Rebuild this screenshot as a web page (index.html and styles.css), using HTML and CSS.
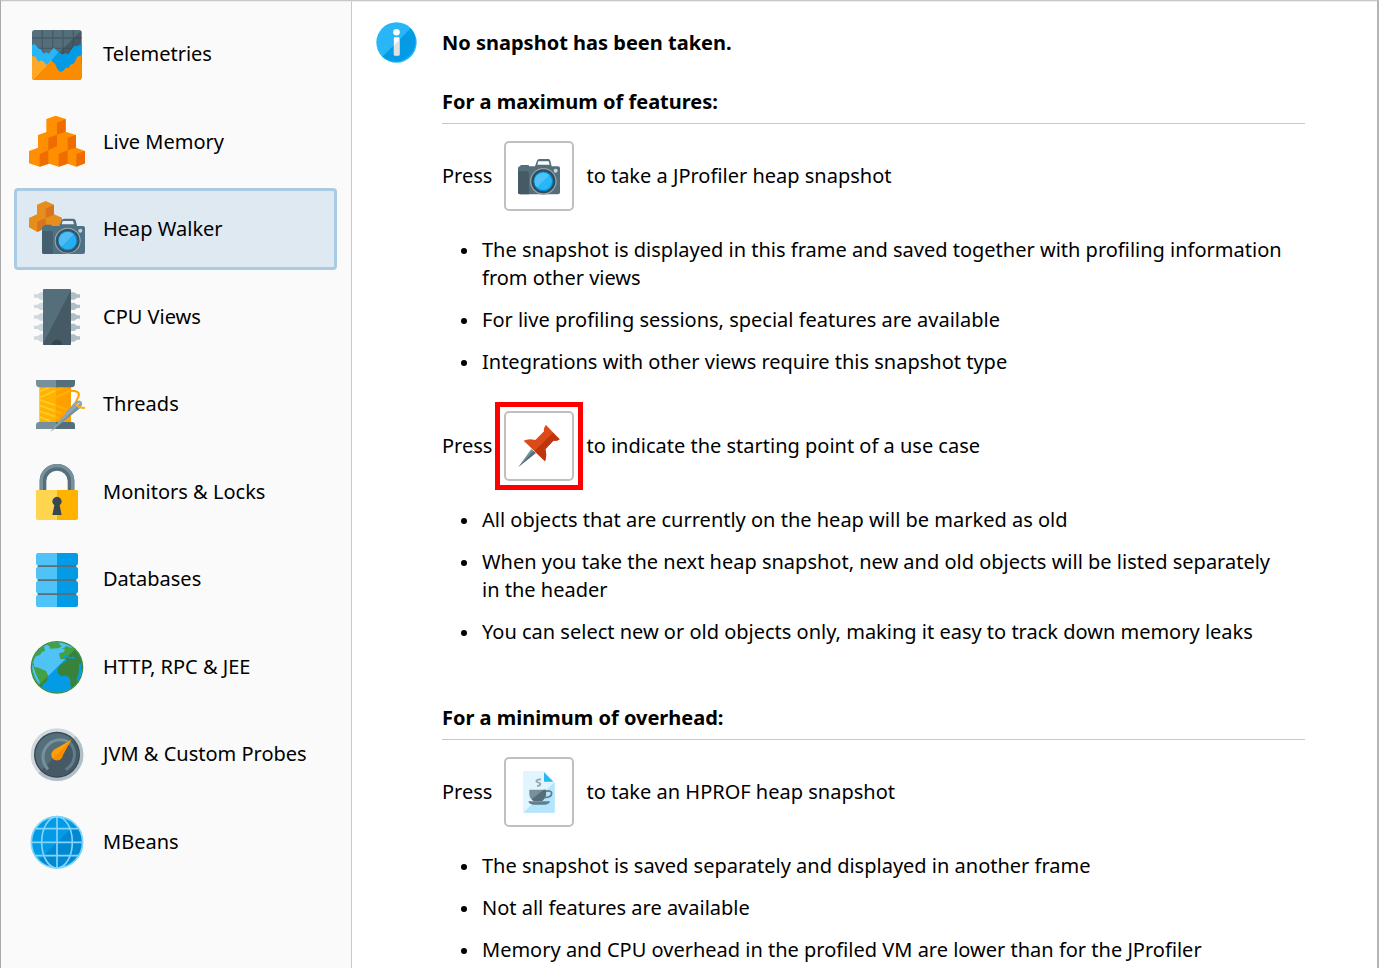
FILE: index.html
```html
<!DOCTYPE html>
<html lang="en">

<head>
    <meta charset="utf-8">
    <title>Heap Walker</title>
    <link rel="stylesheet" href="styles.css">
</head>

<body>

    <div class="frame">
        <nav class="sidebar">
            <ul class="view-list">
                <li>
                    <button type="button" class="view">
                        <svg class="view-icon" viewBox="87 78 168 168">
                            <clipPath id="chart"><rect x="96" y="90" width="149" height="150" rx="8" /></clipPath>
                            <g clip-path="url(#chart)">
                                <path fill="#546e7a" d="M96 90h149v150H96z" />
                                <path fill="#455a64" d="M245 90v100h-100z" />
                                <path stroke="#37474f" stroke-opacity=".5" stroke-width="4" fill="none" d="M127 90v80M158 90v80M189 90v80M220 90v80M96 114h149M96 145h149" />
                                <path fill="#29b6f6" d="M96 134l9-1 9 11 10 5 7 12 8-4 7 4 9-11 7-7 12 13 10 7v60H96z" />
                                <path fill="#039be5" d="M175 157l9 7 12-4 10 2 8-13 9-12 9 2 6-5h7v100H110z" />
                                <path fill="#ffa726" d="M96 168l10 2 9 15 8-4 8 4 9 10 9-9 5-6v60H96z" />
                                <path fill="#fb8c00" d="M103 236l51-54 11 9 7 16 9 9 9-4 7-8 10-1 4-9 10-3 6-10 4-10 14-6v75H100z" />
                            </g>
                        </svg>
                        <span>Telemetries</span>
                    </button>
                </li>
                <li>
                    <button type="button" class="view">
                        <svg class="view-icon" viewBox="87 342 168 168">
                            <path fill="#ff8f00" d="M139 357l28-10 30 10v38l31 10v38l27 10v37l-26 10-26-9-27 9-28-9-29 9-32-10v-37l27-10v-38l25-9z" />
                            <path fill="#ef6c00" d="M171 368l26-11v38l-26 9zM145 413l26-9v35l-26 12zM203 413l25-8v38l-25 8zM119 462l26-11v40l-26 9zM176 461l27-10v40l-27 9zM229 462l26-9v37l-26 10z" />
                        </svg>
                        <span>Live Memory</span>
                    </button>
                </li>
                <li>
                    <button type="button" class="view selected">
                        <svg class="view-icon" viewBox="87 63 168 168">
                            <path fill="#e58e1e" d="M111 74l26-11 25 11v29l24 10v28l-24 10-24-9-26 14-25-14v-28l24-11z" />
                            <path fill="#d9731c" d="M137 86l25-12v30l-25 10zM112 125l25-11v31l-25 11z" />
                            <path fill="#4f7184" d="M132 138q1-4 5-4h14q4 0 5 4h22l7-17q2-5 7-5h28q5 0 7 5l4 17h18q6 0 6 6v72q0 6-6 6H132q-6 0-6-6v-72q0-6 6-6z" />
                            <path fill="#435f70" d="M126 153h26q7 0 7 7v62h-27q-6 0-6-6z" />
                            <path fill="#e4ecf2" d="M188 123h31l3 10h-37z" />
                            <circle cx="241" cy="152" r="6" fill="#bfced8" />
                            <circle cx="203" cy="182" r="39" fill="#9aaebb" />
                            <circle cx="203" cy="182" r="36" fill="#3b525f" />
                            <circle cx="203" cy="182" r="29" fill="#098bd5" />
                            <circle cx="203" cy="182" r="26" fill="#29aef2" />
                            <path fill="#4fbdf3" d="M184 200a26 26 0 0 1 37-37z" />
                        </svg>
                        <span>Heap Walker</span>
                    </button>
                </li>
                <li>
                    <button type="button" class="view">
                        <svg class="view-icon" viewBox="87 327 168 168">
                            <path fill="#cfd8dc" d="M102 343h11l8-6h9v22h-9l-8-6h-11zM102 374h11l8-6h9v22h-9l-8-6h-11zM102 406h11l8-6h9v22h-9l-8-6h-11zM102 437h11l8-6h9v22h-9l-8-6h-11zM102 469h11l8-6h9v22h-9l-8-6h-11z" />
                            <path fill="#b0bec5" d="M240 343h-9l-8-6h-11v22h11l8-6h9zM240 374h-9l-8-6h-11v22h11l8-6h9zM240 406h-9l-8-6h-11v22h11l8-6h9zM240 437h-9l-8-6h-11v22h11l8-6h9zM240 469h-9l-8-6h-11v22h11l8-6h9z" />
                            <rect x="129" y="327" width="84" height="168" rx="4" fill="#546e7a" />
                            <path fill="#455a64" d="M213 330v161q0 4-4 4h-76q-3 0-4-3z" />
                            <path fill="#37474f" d="M155 495a16 16 0 0 1 32 0z" />
                        </svg>
                        <span>CPU Views</span>
                    </button>
                </li>
                <li>
                    <button type="button" class="view">
                        <svg class="view-icon" viewBox="45 48 168 168">
                            <path fill="#ffb300" d="M76 80h49v107H76z" />
                            <path fill="#ffa000" d="M124 80h47v107h-47z" />
                            <path stroke="#ffca28" stroke-width="6" fill="none" d="M78 94l28-12M78 112l46-20M78 120l46 16M78 137l46 16M78 154l46 16M78 171l30 12" />
                            <path stroke="#ffb300" stroke-width="6" fill="none" d="M124 92l24-10M124 112l47-20M124 136l34 12M124 153l20 8M124 170l12 5" />
                            <path fill="#78909c" d="M66 60h58v22H74q-8-2-8-9zM66 207v-13q0-7 8-8h50v21z" />
                            <path fill="#546e7a" d="M124 60h59v13q0 7-8 9h-51zM124 186h51q8 1 8 8v13h-59z" />
                            <path stroke="#ffa000" stroke-width="6" fill="none" d="M170 92q19-1 24 8c5 12-12 20-8 32" />
                            <path fill="#90a4ae" d="M109 216l68-84q14-15 24-8 8 8-2 20l-13 10z" />
                            <path fill="#78909c" d="M109 216l82-77 5 7-10 8z" />
                            <path stroke="#fafafa" stroke-width="3" d="M186 137l10-8" />
                            <path stroke="#ffb300" stroke-width="6" fill="none" d="M187 132q4 12 26 12" />
                        </svg>
                        <span>Threads</span>
                    </button>
                </li>
                <li>
                    <button type="button" class="view">
                        <svg class="view-icon" viewBox="45 312 168 168">
                            <path stroke="#546e7a" stroke-width="20" fill="none" d="M87 392v-29a42 41 0 0 1 84 0v29" />
                            <path stroke="#78909c" stroke-width="10" fill="none" d="M82 392v-30a47 45 0 0 1 94 0v30" />
                            <path fill="#ffd54f" d="M129 390H70q-4 0-4 4v80q0 6 6 6h57z" />
                            <path fill="#ffb300" d="M129 390h59q4 0 4 4v80q0 6-6 6h-57z" />
                            <path fill="#37474f" d="M115 465l6-29a14 14 0 1 1 16 0l6 29z" />
                        </svg>
                        <span>Monitors &amp; Locks</span>
                    </button>
                </li>
                <li>
                    <button type="button" class="view">
                        <svg class="view-icon" viewBox="45 33 168 168">
                            <path stroke="#546e7a" stroke-width="6" d="M71 78h116M71 120h116M71 162h116" />
                            <path fill="#4fc3f7" d="M129 39H72q-6 0-6 6v25q0 6 6 6h57zM129 81H72q-6 0-6 6v25q0 6 6 6h57zM129 123H72q-6 0-6 6v25q0 6 6 6h57zM129 165H72q-6 0-6 6v24q0 6 6 6h57z" />
                            <path fill="#039be5" d="M129 39h57q6 0 6 6v25q0 6-6 6h-57zM129 81h57q6 0 6 6v25q0 6-6 6h-57zM129 123h57q6 0 6 6v25q0 6-6 6h-57zM129 165h57q6 0 6 6v24q0 6-6 6h-57z" />
                        </svg>
                        <span>Databases</span>
                    </button>
                </li>
                <li>
                    <button type="button" class="view">
                        <svg class="view-icon" viewBox="0 0 168 168">
                            <clipPath id="earth"><circle cx="84" cy="85" r="75" /></clipPath>
                            <clipPath id="earth-shade"><path d="M168 1v167H1z" /></clipPath>
                            <circle cx="84" cy="85" r="79" fill="#388e3c" />
                            <g clip-path="url(#earth)">
                                <path fill="#4fc3f7" d="M0 0h168v168H0z" />
                                <path fill="#039be5" clip-path="url(#earth-shade)" d="M0 0h168v168H0z" />
                                <g fill="#43a047">
                                    <path d="M0 80V0h92l-1 16 7 6-9 6-26 1-2-8-10-4-6 4 3 15-9 3-6 8-14 6-6 15 3 15 13 3 9 4 14 7 6 15-5 14-12 10-5 18-11-6q-17-18-19-58z" />
                                    <path d="M90 43l15-4 3-8-9-1 14-9 8 4 22 3 28 20v50l-8-12-8 9-3 18 4 13-9 12-3 12-10 7-7-9-3-14 1-10-6-11-9-3-14 1-10-9v-12l8-13 13-7 8-6-8-4-13 1z" />
                                </g>
                                <g clip-path="url(#earth-shade)" fill="#388239">
                                    <path d="M0 80V0h92l-1 16 7 6-9 6-26 1-2-8-10-4-6 4 3 15-9 3-6 8-14 6-6 15 3 15 13 3 9 4 14 7 6 15-5 14-12 10-5 18-11-6q-17-18-19-58z" />
                                    <path d="M90 43l15-4 3-8-9-1 14-9 8 4 22 3 28 20v50l-8-12-8 9-3 18 4 13-9 12-3 12-10 7-7-9-3-14 1-10-6-11-9-3-14 1-10-9v-12l8-13 13-7 8-6-8-4-13 1z" />
                                </g>
                                <path fill="#4fc3f7" d="M8 74l7 14 6 18 10 20 2 10q-20-17-25-62zM115 16l22 10-11-1z" />
                                <path fill="#039be5" d="M104 52l12-4 5 6 15-1 3 7-19-2-7-5-9 3zM150 76l8-4-3 44-10 14-2-12 6-14z" />
                            </g>
                        </svg>
                        <span>HTTP, RPC &amp; JEE</span>
                    </button>
                </li>
                <li>
                    <button type="button" class="view">
                        <svg class="view-icon" viewBox="45 49 168 168">
                            <circle cx="129" cy="135" r="79" fill="#cfd8dc" />
                            <path fill="#b0bec5" d="M185 79a79 79 0 0 1-112 112z" />
                            <circle cx="129" cy="135" r="69" fill="#37474f" />
                            <circle cx="129" cy="135" r="65" fill="#546e7a" />
                            <path fill="#455a64" d="M175 89a65 65 0 0 1-92 92z" />
                            <path stroke="#78909c" stroke-width="9" fill="none" d="M102 179a52 52 0 0 1 64-81" />
                            <path stroke="#607d8b" stroke-width="9" fill="none" d="M166 98a52 52 0 0 1-11 82" />
                            <path fill="#ffa000" d="M172 90l-52 30 18 24z" />
                            <circle cx="129" cy="135" r="17" fill="#ffa000" />
                            <path fill="#fb8c00" d="M172 90l-31 57a17 17 0 0 1-24 0z" />
                        </svg>
                        <span>JVM &amp; Custom Probes</span>
                    </button>
                </li>
                <li>
                    <button type="button" class="view">
                        <svg class="view-icon" viewBox="45 312 168 168">
                            <circle cx="129" cy="397" r="78" fill="#039be5" />
                            <path fill="#0288d1" d="M184 342a78 78 0 0 1-110 110z" />
                            <g fill="none" stroke="#81d4fa" stroke-width="5">
                                <circle cx="129" cy="397" r="77" />
                                <ellipse cx="129" cy="397" rx="46" ry="77" />
                                <path d="M129 320v154M52 397h154M64 356h130M64 437h130" />
                            </g>
                        </svg>
                        <span>MBeans</span>
                    </button>
                </li>
            </ul>
        </nav>

        <main class="content">
            <svg class="info-icon" viewBox="47 65 124 124">
                <circle cx="109" cy="127" r="61" fill="#29b6f6" />
                <path fill="#039be5" d="M152 84a61 61 0 0 1-86 86z" />
                <circle cx="109" cy="96" r="10" fill="#fff" />
                <rect x="101" y="111" width="17" height="55" rx="3" fill="#fff" />
                <path fill="#e0e0e0" d="M118 119v44q0 3-3 3h-11q-3 0-3-3v-27z" />
            </svg>
            <div class="help">
                <h1>No snapshot has been taken.</h1>

                <section>
                    <h2>For a maximum of features:</h2>
                    <div class="action">
                        <span>Press</span>
                        <span class="tool">
                            <button type="button" class="tool-button" aria-label="Take heap snapshot">
                                <svg viewBox="471 465 126 126">
                                    <path fill="#546e7a" d="M477 499q1-4 5-4h18q4 0 5 4h17l6-17q2-5 7-5h27q5 0 6 5l4 17h19q6 0 6 6v72q0 6-6 6H477q-6 0-6-6v-72q0-6 6-6z" />
                                    <path fill="#455a64" d="M471 514h26q7 0 7 7v62h-27q-6 0-6-6z" />
                                    <path fill="#fff" d="M532 484h31l3 10h-37z" />
                                    <circle cx="584" cy="512" r="6" fill="#cfd8dc" />
                                    <circle cx="547" cy="544" r="40" fill="#90a4ae" />
                                    <circle cx="547" cy="544" r="36" fill="#37474f" />
                                    <circle cx="547" cy="544" r="30" fill="#0288d1" />
                                    <circle cx="547" cy="544" r="26" fill="#29b6f6" />
                                    <path fill="#4fc3f7" d="M528 562a26 26 0 0 1 37-37z" />
                                </svg>
                            </button>
                        </span>
                        <span>to take a JProfiler heap snapshot</span>
                    </div>
                    <ul class="notes">
                        <li>The snapshot is displayed in this frame and saved together with profiling information from other views</li>
                        <li>For live profiling sessions, special features are available</li>
                        <li>Integrations with other views require this snapshot type</li>
                    </ul>
                    <div class="action">
                        <span>Press</span>
                        <span class="tool highlight">
                            <button type="button" class="tool-button" aria-label="Mark heap">
                                <svg viewBox="262 105 126 126">
                                    <path fill="#78909c" d="M263 231l39-54 13 12z" />
                                    <path fill="#546e7a" d="M263 231l45-48 7 7z" />
                                    <path fill="#dd4a1a" d="M346 105l41 43q-8 6-19 4l-24 26q6 19-1 36l-64-62q14-8 35-2l26-26q-2-11 6-19z" />
                                    <path fill="#bf360c" d="M367 128l20 20q-8 6-19 4l-24 26q6 19-1 36l-32-31z" />
                                </svg>
                            </button>
                        </span>
                        <span>to indicate the starting point of a use case</span>
                    </div>
                    <ul class="notes">
                        <li>All objects that are currently on the heap will be marked as old</li>
                        <li>When you take the next heap snapshot, new and old objects will be listed separately in the header</li>
                        <li>You can select new or old objects only, making it easy to track down memory leaks</li>
                    </ul>
                </section>

                <section>
                    <h2>For a minimum of overhead:</h2>
                    <div class="action">
                        <span>Press</span>
                        <span class="tool">
                            <button type="button" class="tool-button" aria-label="Take HPROF snapshot">
                                <svg viewBox="262 91 126 126">
                                    <path fill="#e1f5fe" d="M277 90h64l31 34v92h-95z" />
                                    <path fill="#b3e5fc" d="M356 139l16-15v92h-94z" />
                                    <path fill="#29b6f6" d="M340 95l28 28h-28z" />
                                    <path stroke="#90a4ae" stroke-width="5" fill="none" d="M331 116c-8 1-15 1-14 6s13 2 12 8-5 6-10 6" />
                                    <path fill="#78909c" d="M296 147h50v14q-1 12-12 20h-25q-13-8-13-20z" />
                                    <path fill="#546e7a" d="M346 147v14q-1 12-12 20h-25q-5-3-6-5l36-29z" />
                                    <path stroke="#607d8b" stroke-width="5" fill="none" d="M345 152q18-4 18 6c0 9-9 13-23 13" />
                                    <path fill="#607d8b" d="M293 182h65q-3 10-14 10h-36q-12 0-15-10z" />
                                </svg>
                            </button>
                        </span>
                        <span>to take an HPROF heap snapshot</span>
                    </div>
                    <ul class="notes">
                        <li>The snapshot is saved separately and displayed in another frame</li>
                        <li>Not all features are available</li>
                        <li>Memory and CPU overhead in the profiled VM are lower than for the JProfiler</li>
                    </ul>
                </section>
            </div>
        </main>
    </div>

</body>

</html>
```

FILE: styles.css
```css
* {
    box-sizing: border-box;
}

body {
    margin: 0;
    background-color: #fff;
    color: #000;
    font-family: "Noto Sans", "Open Sans", sans-serif;
    font-size: 20px;
    line-height: 28px;
}

button {
    font: inherit;
    color: inherit;
    cursor: pointer;
}

ul {
    list-style: none;
    margin: 0;
    padding: 0;
}

.frame {
    display: flex;
    height: 100vh;
    overflow: hidden;
    border-top: 1px solid #c8c8c8;
    border-left: 1px solid #aaa;
    border-right: 2px solid #b4b4b4;
}

.sidebar {
    flex: none;
    width: 351px;
    padding: 11px 14px 0 13px;
    background-color: #fafafa;
    border-top: 1px solid #eee;
    border-right: 1px solid #c8c8c8;
}

.view-list {
    display: grid;
    gap: 5px;
}

.view-list li:nth-child(odd) {
    padding-bottom: 1px;
}

.view {
    display: flex;
    align-items: center;
    gap: 18px;
    width: 100%;
    height: 82px;
    padding: 0 12px;
    border: 3px solid transparent;
    border-radius: 4px;
    background: none;
    text-align: left;
    white-space: nowrap;
}

.view.selected {
    background-color: #dfe9f2;
    border-color: #a9cbe3;
}

.view-icon {
    flex: none;
    width: 56px;
    height: 56px;
}

.content {
    display: flex;
    flex: 1;
    align-items: flex-start;
    gap: 25px;
    min-width: 0;
    padding: 20px 72px 0 24px;
    border-top: 1px solid #eee;
}

.info-icon {
    flex: none;
    width: 41px;
    height: 41px;
}

.help {
    flex: 1;
    padding-top: 7px;
}

h1,
h2 {
    margin: 0;
    font-size: 20px;
    font-weight: bold;
}

h2 {
    margin-bottom: 17px;
    padding-bottom: 7px;
    border-bottom: 1px solid #c8c8c8;
}

section {
    margin-top: 31px;
}

section + section {
    margin-top: 58px;
}

.action {
    display: flex;
    align-items: center;
    gap: 12px;
}

.tool-button {
    display: flex;
    align-items: center;
    justify-content: center;
    width: 70px;
    height: 70px;
    padding: 0;
    border: 2px solid #c0c0c0;
    border-radius: 5px;
    background-color: #fff;
}

.tool-button svg {
    width: 42px;
    height: 42px;
}

.highlight {
    outline: 5px solid #f00;
    outline-offset: 4px;
}

.notes {
    display: grid;
    gap: 14px;
    margin: 25px 0 35px;
    padding: 0 16px 0 19px;
}

.notes:last-child {
    margin-bottom: 0;
}

.notes li {
    display: flex;
    align-items: flex-start;
    gap: 15px;
}

.notes li::before {
    content: "";
    flex: none;
    width: 6px;
    height: 6px;
    margin-top: 12px;
    border-radius: 50%;
    background-color: #000;
}
```
